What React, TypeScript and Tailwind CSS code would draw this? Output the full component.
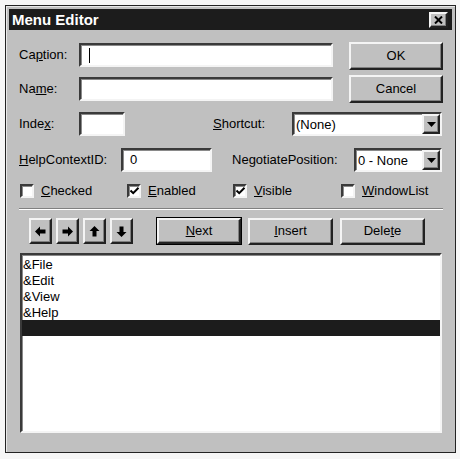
import React from "react";

const font = { fontFamily: '"Liberation Sans", Arial, sans-serif' };

const sunken =
  "border-2 border-t-[#3a3a3a] border-l-[#3a3a3a] border-r-[#f4f4f4] border-b-[#f4f4f4] shadow-[inset_1px_1px_0_#8a8a8a] bg-white";
const raised =
  "border-2 border-t-[#f4f4f4] border-l-[#f4f4f4] border-r-[#222] border-b-[#222] shadow-[inset_-1px_-1px_0_#808080] bg-[#c0c0c0]";

function Btn({ children, w, h = 28, def = false }: { children: React.ReactNode; w: number; h?: number; def?: boolean }) {
  const inner = (
    <div
      className={`${raised} flex items-center justify-center text-[13px] text-black`}
      style={{ width: def ? w - 2 : w, height: def ? h - 2 : h }}
    >
      {children}
    </div>
  );
  if (def) {
    return <div className="border border-black" style={{ width: w, height: h }}>{inner}</div>;
  }
  return inner;
}

function Combo({ w, text }: { w: number; text: string }) {
  return (
    <div className={`${sunken} flex items-center h-[24px]`} style={{ width: w }}>
      <div className="flex-1 pl-[2px] text-[13px] text-black leading-none">{text}</div>
      <div className={`${raised} w-[18px] h-[20px] flex items-center justify-center`}>
        <svg width="9" height="5" viewBox="0 0 9 5">
          <path d="M0 0H9L4.5 5Z" fill="#000" />
        </svg>
      </div>
    </div>
  );
}

function Check({ checked, label, ul, rest, pre = "" }: { checked: boolean; label?: string; ul: string; rest: string; pre?: string }) {
  return (
    <div className="flex items-center">
      <div className={`${sunken} w-[14px] h-[14px] flex items-center justify-center`}>
        {checked && (
          <svg width="9" height="8" viewBox="0 0 9 8">
            <path d="M0.5 3.5L3.2 6.2L8.5 0.8" stroke="#000" strokeWidth="2" fill="none" />
          </svg>
        )}
      </div>
      <span className="ml-[7px] text-[13px] text-black">
        {pre}
        <u>{ul}</u>
        {rest}
      </span>
    </div>
  );
}

function Arrow({ dir }: { dir: "l" | "r" | "u" | "d" }) {
  const rot = { l: 0, r: 180, u: 90, d: 270 }[dir];
  return (
    <div className={`${raised} w-[23px] h-[26px] flex items-center justify-center`}>
      <svg width="11" height="11" viewBox="0 0 11 11" style={{ transform: `rotate(${rot}deg)` }}>
        <path d="M0 5.5L5 0.5V3.5H10.5V7.5H5V10.5Z" fill="#000" />
      </svg>
    </div>
  );
}

export default function App() {
  return (
    <div className="w-[460px] h-[459px] bg-[#f6f6f6] pt-[5px] pl-[5px]" style={font}>
      <div className="w-[451px] h-[448px] border border-[#222] shadow-[inset_1px_1px_0_#e8e8e8] bg-[#c0c0c0] p-[3px] flex flex-col">
        {/* title bar */}
        <div className="h-[21px] bg-[#1c1c1c] flex items-center justify-between pl-[3px] pr-[4px]">
          <span className="text-white font-bold text-[15px] leading-none">Menu Editor</span>
          <div className={`${raised} w-[19px] h-[16px] flex items-center justify-center`}>
            <svg width="9" height="8" viewBox="0 0 9 8">
              <path d="M1 0.5L8 7.5M8 0.5L1 7.5" stroke="#000" strokeWidth="2" />
            </svg>
          </div>
        </div>

        <div className="pl-[10px] pr-[9px] flex flex-col text-black text-[13px]">
          {/* top section */}
          <div className="flex mt-[12px]">
            <div className="flex flex-col pt-[1px] w-[314px]">
              <div className="flex items-center h-[24px]">
                <span className="w-[60px]">
                  Ca<u>p</u>tion:
                </span>
                <div className={`${sunken} w-[254px] h-[24px] flex items-center pl-[8px]`}>
                  <div className="w-px h-[15px] bg-black" />
                </div>
              </div>
              <div className="flex items-center h-[24px] mt-[10px]">
                <span className="w-[60px]">
                  Na<u>m</u>e:
                </span>
                <div className={`${sunken} w-[254px] h-[24px]`} />
              </div>
            </div>
            <div className="flex flex-col ml-[16px]">
              <Btn w={94}>OK</Btn>
              <div className="h-[5px]" />
              <Btn w={94}>Cancel</Btn>
            </div>
          </div>

          {/* index row */}
          <div className="flex items-center h-[24px] mt-[9px]">
            <span className="w-[60px]">
              Inde<u>x</u>:
            </span>
            <div className={`${sunken} w-[46px] h-[24px]`} />
            <span className="ml-[88px] w-[79px]">
              <u>S</u>hortcut:
            </span>
            <Combo w={150} text="(None)" />
          </div>

          {/* help row */}
          <div className="flex items-center h-[24px] mt-[12px]">
            <span className="w-[102px]">
              <u>H</u>elpContextID:
            </span>
            <div className={`${sunken} w-[91px] h-[24px] flex items-center pl-[7px]`}>0</div>
            <span className="ml-[20px] w-[122px]">
              Ne<u>g</u>otiatePosition:
            </span>
            <Combo w={88} text="0 - None" />
          </div>

          {/* checkboxes */}
          <div className="flex items-center h-[16px] mt-[11px] pl-[1px]">
            <div className="w-[107px]">
              <Check checked={false} ul="C" rest="hecked" />
            </div>
            <div className="w-[106px]">
              <Check checked={true} ul="E" rest="nabled" />
            </div>
            <div className="w-[108px]">
              <Check checked={true} ul="V" rest="isible" />
            </div>
            <Check checked={false} ul="W" rest="indowList" />
          </div>

          {/* separator */}
          <div className="mt-[9px] h-[2px] border-t border-t-[#808080] border-b border-b-white" />

          {/* buttons row */}
          <div className="flex items-center mt-[7px] h-[28px]">
            <div className="flex gap-[4px] ml-[10px]">
              <Arrow dir="l" />
              <Arrow dir="r" />
              <Arrow dir="u" />
              <Arrow dir="d" />
            </div>
            <div className="ml-[23px]">
              <Btn w={86} def>
                <span>
                  <u>N</u>ext
                </span>
              </Btn>
            </div>
            <div className="ml-[6px]">
              <Btn w={85} h={27}>
                <span>
                  <u>I</u>nsert
                </span>
              </Btn>
            </div>
            <div className="ml-[7px]">
              <Btn w={85} h={27}>
                <span>
                  Dele<u>t</u>e
                </span>
              </Btn>
            </div>
          </div>

          {/* list */}
          <div className={`${sunken} mt-[8px] ml-[1px] w-[422px] h-[180px] flex flex-col pt-[1px]`}>
            {["&File", "&Edit", "&View", "&Help"].map((t) => (
              <div key={t} className="h-[16px] flex items-center pl-[1px] text-[13px] leading-none">
                {t}
              </div>
            ))}
            <div className="h-[16px] bg-[#1c1c1c]" />
          </div>
        </div>
      </div>
    </div>
  );
}
